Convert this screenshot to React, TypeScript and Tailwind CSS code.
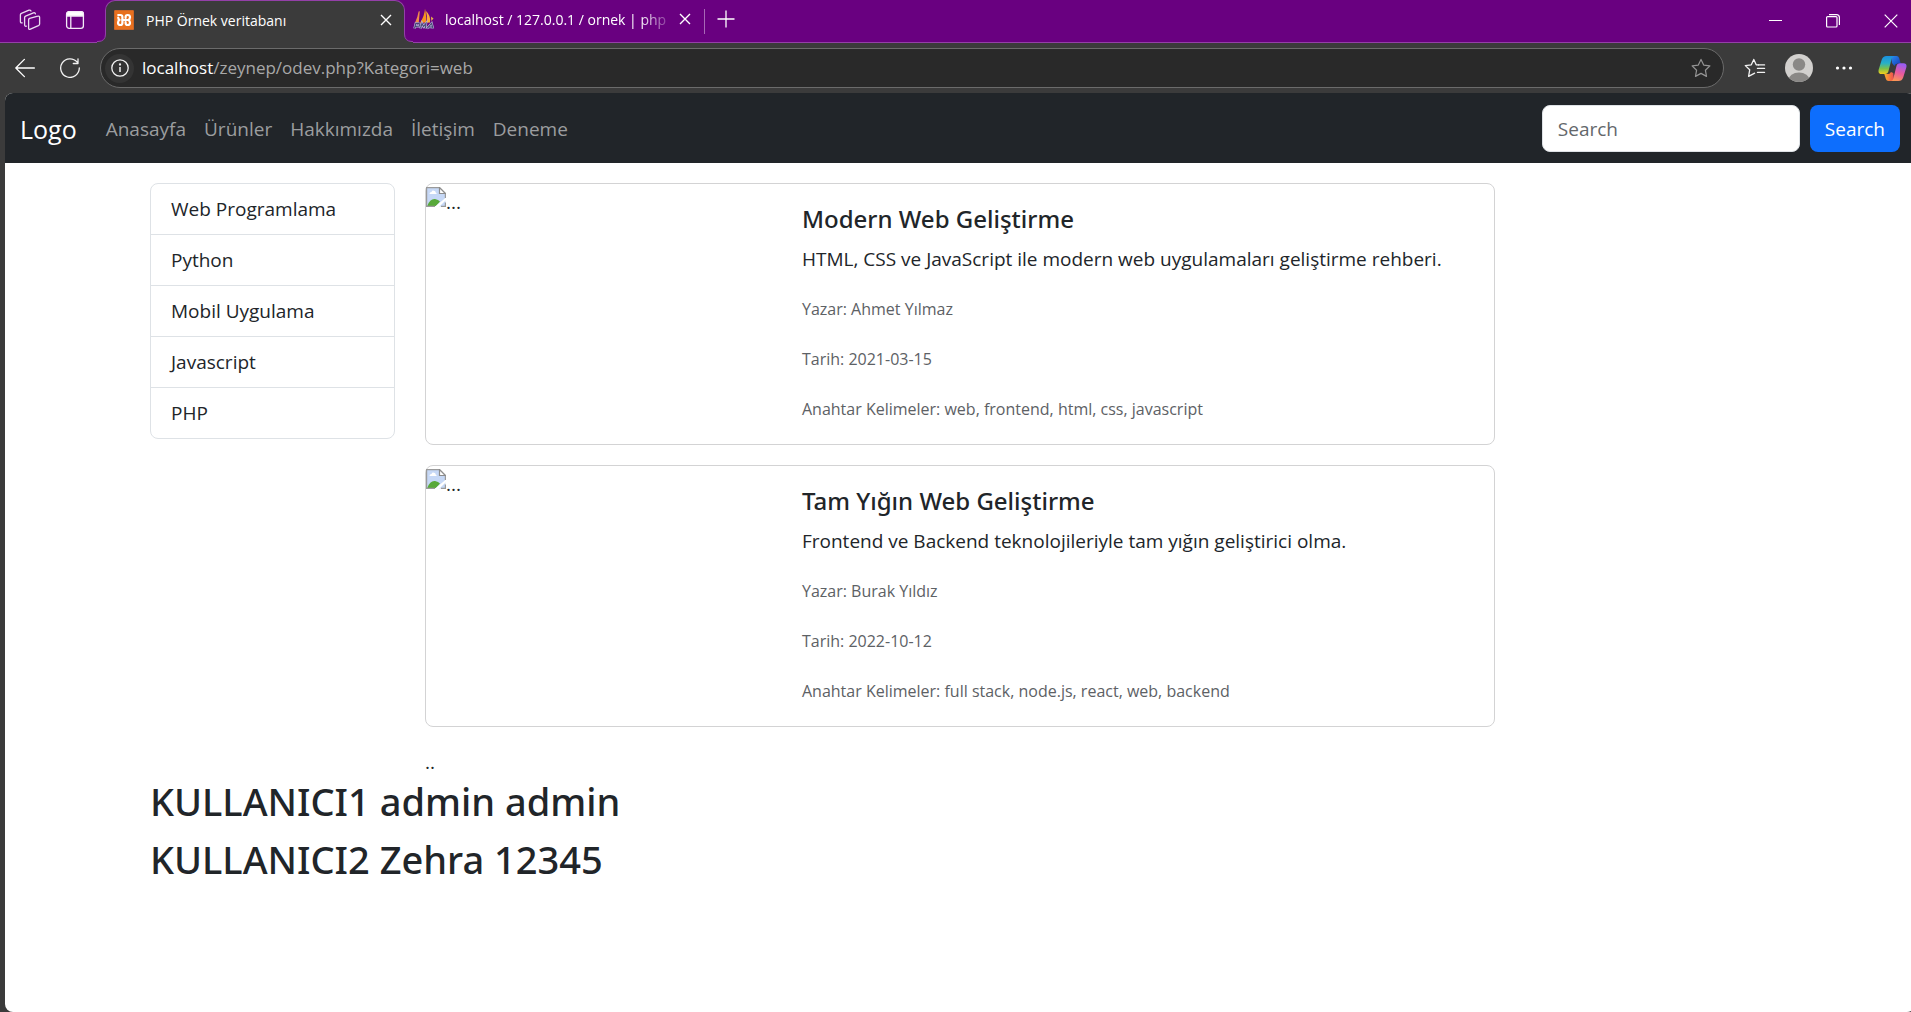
import type { ReactNode } from "react";

const articles = [
  {
    title: "Modern Web Geliştirme",
    summary: "HTML, CSS ve JavaScript ile modern web uygulamaları geliştirme rehberi.",
    author: "Ahmet Yılmaz",
    date: "2021-03-15",
    keywords: "web, frontend, html, css, javascript",
  },
  {
    title: "Tam Yığın Web Geliştirme",
    summary: "Frontend ve Backend teknolojileriyle tam yığın geliştirici olma.",
    author: "Burak Yıldız",
    date: "2022-10-12",
    keywords: "full stack, node.js, react, web, backend",
  },
];

const navLinks = ["Anasayfa", "Ürünler", "Hakkımızda", "İletişim", "Deneme"];
const categories = ["Web Programlama", "Python", "Mobil Uygulama", "Javascript", "PHP"];

function IconButton({ label, className, children }: { label: string; className?: string; children: ReactNode }) {
  return (
    <button type="button" aria-label={label} className={`flex shrink-0 items-center justify-center ${className ?? ""}`}>
      {children}
    </button>
  );
}

function WorkspacesIcon() {
  return (
    <svg width="22" height="22" viewBox="0 0 22 22" fill="none" stroke="#eadcf0" strokeWidth="1.3" strokeLinejoin="round" strokeLinecap="round">
      <path d="M10.6 9.3 Q9.6 9.8 9.6 10.8 V19 Q9.6 21 11.4 20.1 L19.4 16.6 Q20.6 16 20.6 14.9 V8.6 Q20.6 6.6 18.8 7.2 Z" />
      <path d="M7.4 17.2 Q5.6 17.6 5.6 15.8 V8.6 Q5.6 7.6 6.6 7.1 L14.4 3.8 Q16 3.3 16.4 4.8" />
      <path d="M3.2 13.8 Q1.4 14.2 1.4 12.4 V5.8 Q1.4 4.8 2.4 4.3 L10 1.2 Q11.4 .8 12 2" />
    </svg>
  );
}

function TabActionsIcon() {
  return (
    <svg width="20" height="20" viewBox="0 0 20 20" fill="none" stroke="#f3eaf6" strokeWidth="1.3">
      <rect x="1.6" y="1.6" width="16.8" height="16.8" rx="2.6" />
      <path d="M1.6 6V4.2a2.6 2.6 0 0 1 2.6-2.6h11.6a2.6 2.6 0 0 1 2.6 2.6V6z" fill="#fff" />
      <path d="M5.8 6v12.4" />
    </svg>
  );
}

function XamppIcon() {
  return (
    <svg width="20" height="20" viewBox="0 0 20 20" className="shrink-0">
      <rect width="20" height="20" rx="1.5" fill="#e8701e" />
      <rect x=".5" y=".5" width="19" height="19" rx="1" fill="none" stroke="#c9662a" />
      <g fill="none" stroke="#fff" strokeWidth="2.2" strokeLinecap="round" strokeLinejoin="round">
        <path d="M4.2 5H6.400Q8.400 5 8.400 7V13Q8.400 15 6.400 15 4 15 4 12.700 4 10.600 5.600 10 4.200 9.300 4.200 7.600" />
        <path d="M11.600 8V7Q11.600 5 13.600 5 16 5 16 7.300 16 9.300 14.400 10 16 10.700 16 12.700 16 15 13.600 15 11.600 15 11.600 13V12" />
        <path d="M8.400 10H14.400" />
      </g>
    </svg>
  );
}

function PhpMyAdminIcon() {
  return (
    <svg width="22" height="22" viewBox="0 0 22 22" className="shrink-0">
      <path d="M5.600 3.500 L6.800 3.200 Q6.200 9 5.800 14.500 L1.800 15.200 Q4.800 9 5.600 3.500z" fill="#f08a4b" />
      <path d="M12 .8 Q13.400 6 13 14.500 L7 15 Q11.500 8 12 .8z" fill="#f7941d" />
      <path d="M13 3 Q18 7.500 17 14.500 L13.600 14.800 Q14.600 8 13 3z" fill="#fba93a" />
      <path d="M18 8.500 L20.500 10.500 L18.300 13z" fill="#e9b04a" />
      <path
        d="M1.500 20.500 L2.800 15.400 H5.500 Q7.600 16 6.500 18 L2.500 18.400 M7.500 20.500 L9 15.400 L10.500 18.500 L13 15.400 L12.400 20.500 M14 20.500 L18.600 15.400 L20 20.500 M15.600 19 H19"
        fill="none"
        stroke="#b9b8da"
        strokeWidth="2.400"
      />
      <path
        d="M1.500 20.500 L2.800 15.400 H5.500 Q7.600 16 6.500 18 L2.500 18.400 M7.500 20.500 L9 15.400 L10.500 18.500 L13 15.400 L12.400 20.500 M14 20.500 L18.600 15.400 L20 20.500 M15.600 19 H19"
        fill="none"
        stroke="#4a4577"
        strokeWidth="1.100"
      />
    </svg>
  );
}

function CloseIcon() {
  return (
    <svg width="12" height="12" viewBox="0 0 12 12" stroke="#fff" strokeWidth="1.400">
      <path d="M1 1l10 10M11 1L1 11" />
    </svg>
  );
}

/* Concave corner where the active tab meets the toolbar. */
function TabFlare({ side }: { side: "left" | "right" }) {
  return (
    <svg
      width="10"
      height="11"
      viewBox="0 0 10 11"
      className={side === "left" ? "absolute bottom-0 -left-[9px]" : "absolute bottom-0 -right-[9px] -scale-x-100"}
    >
      <path d="M8.500 0V2Q8.500 9.500 1 9.500H0V11H10V0z" fill="#3b3b3b" />
      <path d="M8.500 0V2Q8.500 9.500 1 9.500H0" fill="none" stroke="#9440a8" />
    </svg>
  );
}

function TabStrip() {
  return (
    <div className="flex h-[43px] border-b border-[#9440a8] bg-[#690080] text-[14px] text-white">
      <div className="flex w-[105px] shrink-0 items-center pb-[2px] pl-[19px]">
        <IconButton label="Çalışma alanları" className="w-[22px]">
          <WorkspacesIcon />
        </IconButton>
        <IconButton label="Sekme eylemleri" className="ml-6 w-5">
          <TabActionsIcon />
        </IconButton>
      </div>
      <div className="relative -mb-px flex w-[300px] shrink-0 items-center rounded-t-[10px] border border-b-0 border-[#9440a8] bg-[#3b3b3b] pr-3 pb-1 pl-2">
        <TabFlare side="left" />
        <XamppIcon />
        <span className="ml-3 flex-1">PHP Örnek veritabanı</span>
        <IconButton label="Sekmeyi kapat" className="size-3">
          <CloseIcon />
        </IconButton>
        <TabFlare side="right" />
      </div>
      <div className="flex w-[299px] shrink-0 items-center pr-[13px] pb-1 pl-2">
        <PhpMyAdminIcon />
        <span className="ml-[10px] whitespace-nowrap [mask-image:linear-gradient(to_right,#000_88%,transparent_104%)]">
          localhost / 127.0.0.1 / ornek | php
        </span>
        <IconButton label="Sekmeyi kapat" className="ml-auto size-3">
          <CloseIcon />
        </IconButton>
      </div>
      <div className="mt-[9px] h-[25px] w-px bg-[#a868b6]" />
      <IconButton label="Yeni sekme" className="ml-3 w-[18px] pb-1">
        <svg width="18" height="18" viewBox="0 0 18 18" stroke="#fff" strokeWidth="1.300">
          <path d="M9 .5v17M.5 9h17" />
        </svg>
      </IconButton>
      <div className="ml-auto flex items-center pr-[13px]">
        <IconButton label="Simge durumuna küçült" className="w-[58px]">
          <svg width="13" height="13" viewBox="0 0 13 13" stroke="#fff">
            <path d="M0 5.500h13" />
          </svg>
        </IconButton>
        <IconButton label="Geri yükle" className="w-[58px]">
          <svg width="14" height="14" viewBox="0 0 14 14" fill="none" stroke="#fff" strokeWidth="1.200">
            <rect x=".6" y="2.600" width="10.400" height="10.400" rx="1" />
            <path d="M3 .6h7.400a3 3 0 0 1 3 3v7.400" />
          </svg>
        </IconButton>
        <IconButton label="Kapat" className="ml-[22px] w-[14px]">
          <svg width="14" height="14" viewBox="0 0 14 14" stroke="#fff" strokeWidth="1.200">
            <path d="M.7.700l12.600 12.600M13.300.7L.7 13.300" />
          </svg>
        </IconButton>
      </div>
    </div>
  );
}

function CopilotIcon() {
  return (
    <svg width="29" height="27" viewBox="0 0 29 27">
      <defs>
        <linearGradient id="cpLeft" x1="0" y1="0" x2="0" y2="1">
          <stop offset="0" stopColor="#1b8fe0" />
          <stop offset=".4" stopColor="#27b0c8" />
          <stop offset=".7" stopColor="#7cc04a" />
          <stop offset="1" stopColor="#f4cf1c" />
        </linearGradient>
        <linearGradient id="cpRight" x1=".5" y1="0" x2=".2" y2="1">
          <stop offset="0" stopColor="#9a5cf0" />
          <stop offset=".5" stopColor="#ea5a9c" />
          <stop offset="1" stopColor="#fb9b50" />
        </linearGradient>
        <linearGradient id="cpTop" x1="0" y1="0" x2="1" y2="1">
          <stop offset="0" stopColor="#2a8df0" />
          <stop offset="1" stopColor="#1437b8" />
        </linearGradient>
        <linearGradient id="cpBottom" x1="0" y1="0" x2="1" y2="0">
          <stop offset="0" stopColor="#fbb02a" />
          <stop offset="1" stopColor="#ee4a52" />
        </linearGradient>
      </defs>
      <path d="M13 1h5.500q2 0 2.600 2l1.600 5.500h-3q-2.600 0-3.300 2.500L14 8z" fill="url(#cpTop)" />
      <path d="M16 26H10.500q-2 0-2.600-2L6.300 19h4q2 0 2.600-2l2.400 1z" fill="url(#cpBottom)" />
      <path d="M8.500 1H16q-1.800.4-2.400 2.800L10.500 16q-.7 3-3.500 3H3.500Q-.3 19 .7 14.500L3.800 4.500Q5 1 8.500 1z" fill="url(#cpLeft)" />
      <path d="M20.500 26H13q1.800-.4 2.400-2.800L18.500 11q.7-2.800 3.500-2.800h3.500q3.800 0 2.800 4.300L25.200 22.500Q24 26 20.500 26z" fill="url(#cpRight)" />
    </svg>
  );
}

const starPath = "M10 1.400l2.700 5.700 6.200.8-4.500 4.300 1.100 6.200L10 15.400l-5.500 3 1.100-6.200L1.100 7.900l6.200-.8z";

function AddressBar() {
  return (
    <div className="flex h-[50px] items-center bg-[#3b3b3b] pl-[15px]">
      <IconButton label="Geri" className="w-5">
        <svg width="20" height="20" viewBox="0 0 20 20" fill="none" stroke="#fff" strokeWidth="1.300" strokeLinecap="round" strokeLinejoin="round">
          <path d="M19.400 10H.8M9.400 1.400L.8 10l8.600 8.600" />
        </svg>
      </IconButton>
      <IconButton label="Yenile" className="ml-[25px] w-5">
        <svg width="20" height="20" viewBox="0 0 20 20" fill="none" stroke="#f2f2f2" strokeWidth="1.300" strokeLinecap="round" strokeLinejoin="round">
          <path d="M19.300 10A9.300 9.300 0 1 1 17.200 4.200M18 .8v4.700h-4.700" />
        </svg>
      </IconButton>
      <div className="ml-5 flex h-10 min-w-0 flex-1 items-center rounded-full border border-[#6b6b6b] bg-[#292929] pr-3 pl-1">
        <IconButton label="Site bilgileri" className="size-[29px] rounded-full bg-[#343434]">
          <svg width="18" height="18" viewBox="0 0 18 18" fill="none" stroke="#f2f2f2" strokeWidth="1.300">
            <circle cx="9" cy="9" r="8.200" />
            <path d="M9 8v5" strokeWidth="1.500" />
            <circle cx="9" cy="5.500" r=".5" />
          </svg>
        </IconButton>
        <a href="#adres" className="ml-2 flex-1 truncate text-[17px] text-[#a8a8a8]">
          <span className="text-white">localhost</span>/zeynep/odev.php?Kategori=web
        </a>
        <IconButton label="Sık kullanılanlara ekle" className="w-5">
          <svg width="20" height="20" viewBox="0 0 20 20" fill="none" stroke="#949494" strokeWidth="1.200" strokeLinejoin="round">
            <path d={starPath} />
          </svg>
        </IconButton>
      </div>
      <IconButton label="Sık kullanılanlar" className="ml-5 w-[22px]">
        <svg width="22" height="20" viewBox="0 0 22 20" fill="none" stroke="#f2f2f2" strokeWidth="1.300" strokeLinejoin="round" strokeLinecap="round">
          <path d="M14.500 6.900l-2.300-.1L9.800 1.400 7.300 6.800l-6 .8 4.400 4.200-1.100 6.600 5.200-2.800.8-.4" />
          <path d="M13.500 10.400h7M13.500 14.400h7M14.500 6.900h6" strokeWidth="1.400" />
        </svg>
      </IconButton>
      <IconButton label="Profil" className="ml-[19px] w-7">
        <svg width="28" height="28" viewBox="0 0 28 28">
          <clipPath id="avatarClip">
            <circle cx="14" cy="14" r="14" />
          </clipPath>
          <g clipPath="url(#avatarClip)">
            <rect width="28" height="28" fill="#d2d0ce" />
            <circle cx="14" cy="10.500" r="6.200" fill="#8a8886" />
            <ellipse cx="14" cy="26" rx="10.500" ry="7.500" fill="#8a8886" />
          </g>
        </svg>
      </IconButton>
      <IconButton label="Ayarlar ve daha fazlası" className="ml-[22px] w-[18px]">
        <svg width="18" height="4" viewBox="0 0 18 4" fill="#fff">
          <circle cx="2.500" cy="2" r="1.600" />
          <circle cx="9" cy="2" r="1.600" />
          <circle cx="15.500" cy="2" r="1.600" />
        </svg>
      </IconButton>
      <IconButton label="Copilot" className="mr-1 ml-[25px] w-[29px]">
        <CopilotIcon />
      </IconButton>
    </div>
  );
}

function Navbar() {
  return (
    <nav className="flex items-center rounded-t-[8px] bg-[#212529] px-[15px] pt-3 pb-[11px]">
      <a href="#logo" className="mr-5 text-[25px] leading-[38px] text-white">
        Logo
      </a>
      <ul className="flex">
        {navLinks.map((link) => (
          <li key={link}>
            <a href={`#${link}`} className="block px-[9px] text-[#9b9d9f]">
              {link}
            </a>
          </li>
        ))}
      </ul>
      <form className="ml-auto flex gap-[10px]" onSubmit={(e) => e.preventDefault()}>
        <input
          type="search"
          aria-label="Search"
          placeholder="Search"
          className="h-[47px] w-[258px] rounded-[8px] border border-[#dee2e6] bg-white px-[15px] text-[#212529] placeholder:text-[#63676b]"
        />
        <button type="submit" className="h-[47px] rounded-[8px] bg-[#0d6efd] px-[15px] text-white">
          Search
        </button>
      </form>
    </nav>
  );
}

function BrokenImage() {
  return (
    <div className="flex w-1/3 items-start pt-[3px]" role="img" aria-label="...">
      <svg width="20" height="20" viewBox="0 0 20 20" className="shrink-0">
        <path d="M.6.600H13.500L19.400 6.500V19.400H.6z" fill="#c6d8f6" />
        <path d="M3.500 7Q3.500 5 5.500 5 6.200 3 8 3.800 9.800 4 9.600 5.600 11 6 10.500 7z" fill="#fff" />
        <path d="M1.200 19Q4 11.500 9 12 12.500 12.500 14 14.500L10 19z" fill="#58a93a" />
        <path d="M20 10.500V13L13 20H8.500z" fill="#fff" />
        <path d="M9 19.400H.6V.6H13.500L19.400 6.500V11M15 19.400h4.400V15.500" fill="none" stroke="#9a9a9a" strokeWidth="1.200" />
        <path d="M13.500.6V6.500H19.400z" fill="#fff" stroke="#8c8c8c" strokeWidth="1.200" />
      </svg>
      <span>...</span>
    </div>
  );
}

function ArticleCard({ article }: { article: (typeof articles)[number] }) {
  return (
    <article className="mb-5 flex rounded-[8px] border border-[#d3d3d4]">
      <BrokenImage />
      <div className="w-2/3 p-5">
        <h5 className="mb-[10px] font-['Noto_Sans',sans-serif] text-[24px] leading-[30px] font-medium">{article.title}</h5>
        <p className="mb-5">{article.summary}</p>
        <div className="flex flex-col gap-5 text-[16px] leading-[30px] text-[#5d6165]">
          <p>Yazar: {article.author}</p>
          <p>Tarih: {article.date}</p>
          <p>Anahtar Kelimeler: {article.keywords}</p>
        </div>
      </div>
    </article>
  );
}

export default function App() {
  return (
    <div className="flex min-h-screen flex-col overflow-hidden bg-[#3b3b3b] font-['Open_Sans','Noto_Sans',sans-serif]">
      <TabStrip />
      <AddressBar />
      <div className="-mr-1 ml-[5px] flex-1 rounded-[8px] bg-white text-[19px] leading-[30px] text-[#212529]">
        <Navbar />
        <main className="mx-auto max-w-[1650px] px-[15px] pt-5">
          <div className="-mx-[15px] flex">
            <aside className="w-1/6 px-[15px]">
              <ul className="divide-y divide-[#dee2e6] rounded-[8px] border border-[#dee2e6]">
                {categories.map((name) => (
                  <li key={name}>
                    <a href={`#${name}`} className="block px-5 py-[10px]">
                      {name}
                    </a>
                  </li>
                ))}
              </ul>
            </aside>
            <section className="w-2/3 px-[15px]">
              {articles.map((article) => (
                <ArticleCard key={article.title} article={article} />
              ))}
              <p>..</p>
            </section>
          </div>
          <div className="flex flex-col gap-[10px] font-['Noto_Sans',sans-serif] text-[38px] leading-[48px] font-medium">
            <h1>KULLANICI1 admin admin</h1>
            <h1>KULLANICI2 Zehra 12345</h1>
          </div>
        </main>
      </div>
    </div>
  );
}
